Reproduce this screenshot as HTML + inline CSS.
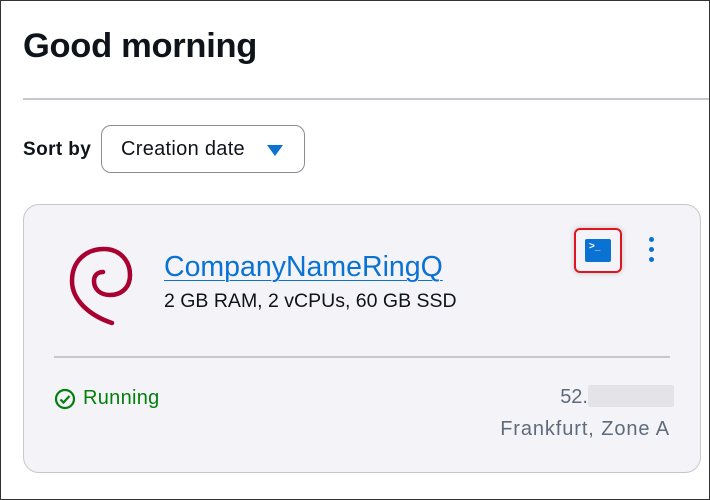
<!DOCTYPE html>
<html><head><style>
*{margin:0;padding:0;box-sizing:border-box}
body{width:710px;height:500px;background:#fff;font-family:"Liberation Sans",sans-serif;position:relative;overflow:hidden}
.frame{position:absolute;left:0;top:0;width:710px;height:500px;border:1px solid #333;pointer-events:none}
h1{position:absolute;left:23px;top:27px;font-size:34.5px;font-weight:bold;color:#0f141a;letter-spacing:-0.3px}
.hr{position:absolute;left:23px;top:98px;width:690px;height:2px;background:#c6c6cd}
.sort{position:absolute;left:23px;top:139px;font-size:19px;font-weight:bold;color:#0f141a;letter-spacing:0.4px}
.dd{position:absolute;left:101px;top:125px;width:204px;height:48px;border:1px solid #8c8c94;border-radius:10px;font-size:20px;color:#0f141a;padding:12px 0 0 19px;letter-spacing:0.3px}
.tri{position:absolute;left:165px;top:19px;width:0;height:0;border-left:8px solid transparent;border-right:8px solid transparent;border-top:11px solid #0972d3}
.card{position:absolute;left:23px;top:204px;width:678px;height:269px;background:#f4f4f8;border:1px solid #c6c6cd;border-radius:16px}
.name{position:absolute;left:140px;top:46px;font-size:28.5px;color:#0972d3;text-decoration:underline;text-underline-offset:4px;text-decoration-thickness:1px}
.spec{position:absolute;left:140px;top:85px;font-size:19.5px;color:#0f141a}
.sep{position:absolute;left:30px;top:151px;width:616px;height:2px;background:#c6c6cd}
.run{position:absolute;left:30px;top:182px;font-size:20px;color:#037f0c;display:flex;align-items:center;gap:7px;letter-spacing:0.3px}
.ip{position:absolute;right:26px;top:180px;font-size:20px;color:#5f6b7a}
.blur{display:inline-block;width:86px;height:22px;background:#e4e4e8;vertical-align:-4px;border-radius:2px}
.zone{position:absolute;right:30px;top:213px;font-size:20px;color:#5f6b7a;letter-spacing:0.9px}
.term{position:absolute;left:550px;top:23px;width:48px;height:45px;border:2px solid #e0141e;border-radius:6px;box-shadow:0 0 6px rgba(0,0,0,.2)}
.tin{position:absolute;left:9px;top:9px;width:26px;height:23px;background:#0972d3;border-radius:2px;color:#fff;font-size:10px;font-weight:bold;padding:3px 0 0 4px;line-height:10px}
.dots{position:absolute;left:625px;top:32px;width:5px}
.dots i{display:block;width:5px;height:5px;border-radius:50%;background:#0972d3;margin-bottom:5px}
</style></head><body>
<h1>Good morning</h1>
<div class="hr"></div>
<div class="sort">Sort by</div>
<div class="dd">Creation date<div class="tri"></div></div>
<div class="card">
<svg style="position:absolute;left:44px;top:40px" width="66" height="82" viewBox="0 0 66 82">
<path d="M44 78 C20 70 4 54 4 36 C4 16 18 4 36 4 C52 4 62 16 62 30 C62 44 52 50 42 50 C32 50 26 44 26 36 C26 30 30 27 35 27" fill="none" stroke="#a80030" stroke-width="4.5" stroke-linecap="round"/>
</svg>
<div class="name">CompanyNameRingQ</div>
<div class="spec">2 GB RAM, 2 vCPUs, 60 GB SSD</div>
<div class="term"><div class="tin">&gt;_</div></div>
<div class="dots"><i></i><i></i><i></i></div>
<div class="sep"></div>
<div class="run"><svg width="22" height="22" viewBox="0 0 22 22"><circle cx="11" cy="11" r="9" fill="none" stroke="#037f0c" stroke-width="2.2"/><path d="M6.5 11.5l3 3 6-6.5" fill="none" stroke="#037f0c" stroke-width="2.2"/></svg>Running</div>
<div class="ip">52.<span class="blur"></span></div>
<div class="zone">Frankfurt, Zone A</div>
</div>
<div class="frame"></div>
</body></html>
